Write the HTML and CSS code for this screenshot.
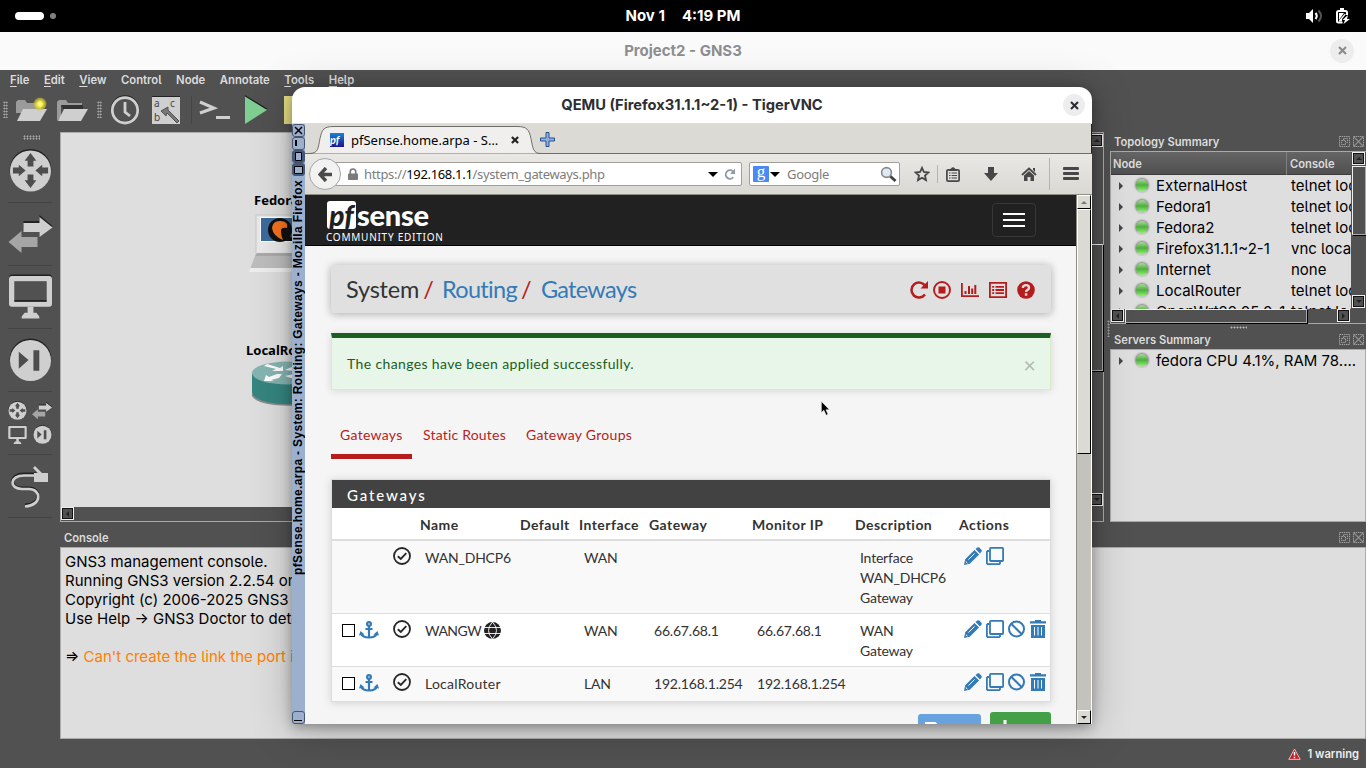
FILE: index.html
```
<!DOCTYPE html>
<html lang="en">
<head>
  <meta charset="UTF-8">
  <meta name="viewport" content="width=device-width, initial-scale=1.0">
  <title>Project2 - GNS3</title>
  <link rel="stylesheet" href="styles.css">
</head>
<body>
  <!-- shared icons -->
  <svg class="sprite" aria-hidden="true">
    <defs>
      <radialGradient id="glow"><stop offset="0" stop-color="#fffde0"/><stop offset=".35" stop-color="#fff44a"/><stop offset="1" stop-color="#c9bd20" stop-opacity=".5"/></radialGradient>
      <linearGradient id="navy" x2="0" y2="1"><stop offset="0" stop-color="#1484d8"/><stop offset="1" stop-color="#20128c"/></linearGradient>
    </defs>
    <symbol id="router" viewBox="0 0 44 44"><circle cx="22" cy="21.3" r="21.3" fill="#222"/><circle cx="22" cy="22.5" r="21" fill="#cfcfcf"/><path fill="#4d4d4d" d="M22 4l6 8h-3v6h-6v-6h-3zM22 40l6-8h-3v-6h-6v6h-3zM17 22l-7-6v3H4v6h6v3zM27 22l7-6v3h6v6h-6v3z"/></symbol>
    <symbol id="switch" viewBox="0 0 44 38"><path fill="#222" d="M15 6h16V0l13 11-13 10v-6H15z"/><path fill="#cfcfcf" d="M15 8h16V2l13 10.500L31 22v-5H15z"/><path fill="#a5a5a5" d="M29 22H13v-6L0 27l13 11v-6h16z"/></symbol>
    <symbol id="host" viewBox="0 0 44 45"><path fill="#222" fill-rule="evenodd" d="M3 0h38a3 3 0 0 1 3 3v27H0V3a3 3 0 0 1 3-3zM5.500 7v19h33V7z"/><path fill="#cfcfcf" fill-rule="evenodd" d="M3 1.500h38a3 3 0 0 1 3 3V30a3 3 0 0 1-3 3H3a3 3 0 0 1-3-3V4.500a3 3 0 0 1 3-3zM5.500 7v20.500h33V7z"/><path fill="#222" d="M5.500 26.500h33v1.300h-33z"/><path fill="#cfcfcf" d="M19 33h6v6h3l3 4v2H13v-2l3-4h3z"/></symbol>
    <symbol id="security" viewBox="0 0 44 44"><circle cx="22" cy="21.300" r="21.300" fill="#222"/><circle cx="22" cy="22.500" r="21" fill="#cfcfcf"/><path fill="#4d4d4d" d="M10 13.500L20 22l-10 9zM25 12h6v21h-6z"/></symbol>
    <symbol id="float" viewBox="0 0 11 11"><path fill="none" stroke="#a0a0a0" stroke-dasharray="1.500 .7" d="M.5.5h10v10H.5zM2.500 4.500h4v4h-4zM4.500 4V2.500h4v4H7"/></symbol>
    <symbol id="shut" viewBox="0 0 11 11"><path fill="none" stroke="#a0a0a0" stroke-dasharray="1.500 .7" d="M.5.5h10v10H.5z"/><path stroke="#8c8c8c" stroke-width="1.300" d="M1 1l9 9M10 1l-9 9"/></symbol>
    <symbol id="ok" viewBox="0 0 18 18"><circle cx="9" cy="9" r="8" fill="none" stroke="#282828" stroke-width="1.800"/><path d="M4.800 9.200l3 2.700 5.500-5.700" fill="none" stroke="#282828" stroke-width="1.900"/></symbol>
    <symbol id="anchor" viewBox="0 0 20 18"><g fill="none" stroke="#337ab7" stroke-width="2.200"><circle cx="10" cy="3" r="1.900"/><path d="M10 5v12M6.500 8h7M2 12c.8 3 4 4.500 8 4.500s7.200-1.500 8-4.500"/></g><path fill="#337ab7" d="M0 14.500L1.500 10l4 3.500zM20 14.500L18.500 10l-4 3.500z"/></symbol>
    <symbol id="pencil" viewBox="0 0 18 18"><path fill="#337ab7" d="M0 18l1.200-5.800 9.300-9.300 4.600 4.600-9.300 9.300zM11.500 2L13.300.6q1-.9 2 0l2.100 2.100q.9 1 0 2l-1.500 1.800z"/><path d="M4.500 12.500l6-6M1.800 14.500l1.700 1.700" stroke="#fff" fill="none"/></symbol>
    <symbol id="clone" viewBox="0 0 18 18"><g fill="none" stroke="#337ab7" stroke-width="1.800"><rect x="4" y=".9" width="13.100" height="13.100" rx=".8"/><path d="M3.300 4H1.700l-.8.800v11.500l.8.800h11.500l.8-.8v-1.500"/></g></symbol>
    <symbol id="ban" viewBox="0 0 18 18"><g fill="none" stroke="#337ab7" stroke-width="2"><circle cx="8.500" cy="9" r="7.500"/><path d="M3.200 3.700l10.600 10.600"/></g></symbol>
    <symbol id="trash" viewBox="0 0 16 18"><path fill="#337ab7" fill-rule="evenodd" d="M5 0h6v1.300h5v2.200H0V1.300h5zM1 5h14v13H1zM4 7v8.500h1V7zM7.500 7v8.500h1V7zM11 7v8.500h1V7z"/></symbol>
  </svg>

  <div class="topbar">
    <div class="workspaces"><span class="pill"></span><span class="dot"></span></div>
    <div class="clock"><span>Nov 1</span><span>4:19 PM</span></div>
    <div class="tray">
      <svg width="17" height="14" viewBox="0 0 17 14"><path fill="#fff" d="M0 4h3l4-4v14l-4-4H0z"/><path d="M9.500 4q2.500 3 0 6" fill="none" stroke="#fff" stroke-width="2"/><path d="M12.500 1.500q5 5.500 0 11" fill="none" stroke="#555" stroke-width="2"/></svg>
      <svg width="14" height="16" viewBox="0 0 14 16"><path d="M6.500 14.500H2.500q-1.500 0-1.500-1.500V4.500Q1 3 2.500 3h7Q11 3 11 4.500V7" fill="none" stroke="#fff" stroke-width="2"/><path fill="#fff" d="M4 0h4v3H4zM3 5h5L3 12zM3 12.500L8.500 6H10L6 11v2.500H3zM12 7l-5.500 5H9l-1.500 4L14 11h-3z"/></svg>
    </div>
  </div>

  <div class="gns3">
    <div class="titlebar">Project2 - GNS3
      <span class="close"><svg width="9" height="9" viewBox="0 0 9 9"><path d="M1 1l7 7M8 1L1 8" stroke="#8c8c8c" stroke-width="2.200"/></svg></span>
    </div>
    <div class="menubar">
      <span><u>F</u>ile</span><span><u>E</u>dit</span><span><u>V</u>iew</span><span>Control</span><span>Node</span><span>Annotate</span><span><u>T</u>ools</span><span><u>H</u>elp</span>
    </div>
    <div class="toolbar">
      <span class="grip-v"></span>
      <svg class="t-new" width="31" height="26" viewBox="0 0 31 26"><path fill="#9b9b9b" d="M0 5l2-2h7l2 3h14v10H0z"/><path fill="#cfcfcf" d="M7 12h24l-7 12H1z"/><circle cx="24" cy="7" r="6.500" fill="url(#glow)"/></svg>
      <svg class="t-open" width="31" height="26" viewBox="0 0 31 26"><path fill="#9b9b9b" d="M0 5l2-2h7l2 3h14v2H4v12L0 24z"/><path fill="#333" d="M4 8h22v4H6z"/><path fill="#cfcfcf" d="M7 12h24l-7 12H1z"/></svg>
      <span class="grip-v"></span>
      <svg class="t-clock" width="30" height="30" viewBox="0 0 30 30"><circle cx="15" cy="14.500" r="13" fill="none" stroke="#222" stroke-width="2.600"/><circle cx="15" cy="15.300" r="12.700" fill="none" stroke="#cfcfcf" stroke-width="2.800"/><path d="M15 7v10l5 4" fill="none" stroke="#cfcfcf" stroke-width="2.800"/></svg>
      <svg class="t-abc" width="28" height="28" viewBox="0 0 28 28"><path fill="#222" d="M0 0h28v3H0z"/><path fill="#cfcfcf" d="M0 1h28v27H0z"/><g fill="#444"><text x="2" y="11">a</text><text x="18" y="11">c</text><text x="2" y="25">b</text></g><path fill="#777" stroke="#555" d="M9 15l7-4v3l11 11-2 2-10-10-1 3z"/></svg>
      <span class="sep"></span>
      <svg class="t-term" width="31" height="22" viewBox="0 0 31 22"><path d="M1 3l14 6L1 14" fill="none" stroke="#cfcfcf" stroke-width="3"/><path fill="#cfcfcf" d="M17 17h14v3H17z"/></svg>
      <svg class="t-play" width="23" height="29" viewBox="0 0 23 29"><path fill="#222" d="M0 0l23 14H0z"/><path fill="#80cf92" d="M0 1.500L22 15 0 29z"/></svg>
      <span class="note"></span>
    </div>

    <div class="workspace">
      <div class="dock">
        <span class="grip-h"></span>
        <div class="tool"><svg width="43" height="43"><use href="#router"/></svg></div>
        <div class="tool"><svg width="45" height="38"><use href="#switch"/></svg></div>
        <div class="tool"><svg width="43" height="45"><use href="#host"/></svg></div>
        <div class="tool"><svg width="43" height="44"><use href="#security"/></svg></div>
        <div class="tool all">
          <svg width="19" height="19"><use href="#router"/></svg><svg width="20" height="19"><use href="#switch"/></svg>
          <svg width="19" height="19"><use href="#host"/></svg><svg width="19" height="19"><use href="#security"/></svg>
        </div>
        <div class="tool"><svg width="40" height="46" viewBox="0 0 40 46"><path fill="none" stroke="#222" stroke-width="3" d="M26 11H14C-1 11-1 25 12 25h7c12 0 14 16-4 17"/><path fill="none" stroke="#cfcfcf" stroke-width="2.600" d="M26 12.500H14C-1 12.500-1 26 12 26h7c12 0 14 16-4 17.500"/><path fill="#cfcfcf" d="M24 10h4l-5-5 2-2 7 7h6v9H24z"/></svg></div>
      </div>

      <div class="main">
        <div class="upper">
          <div class="canvas-frame">
            <div class="canvas">
              <div class="node fedora">
                <b>Fedora1</b>
                <svg width="80" height="62" viewBox="0 0 80 62"><path fill="#e9e9e9" stroke="#c8c8c8" d="M7 2h66v40H7z"/><path fill="#3c6c9d" stroke="#fff" d="M11.500 4.500h56v24h-56z"/><circle cx="31" cy="17" r="12" fill="#111"/><path fill="#f4731c" d="M23 15q1-8 9-7 8 1 6 7-6-1-6 3 0 5 2 9-10-4-11-12z"/><path fill="#111" d="M37 20l10 8H36z"/><path fill="#aaa" d="M8 40h64v3H6z"/><path fill="#bdbdbd" d="M6 43h68l6 16H0z"/><path fill="#eee" d="M1 55h78l1 4H0z"/></svg>
              </div>
              <div class="node local">
                <b>LocalRouter</b>
                <svg width="72" height="46" viewBox="0 0 72 46"><path fill="#8c8c8c" d="M0 33v2c6 13 66 13 72 0v-2z"/><path fill="#36857f" d="M0 12v20c4 15 68 15 72 0V12z"/><ellipse cx="36" cy="12" rx="36" ry="11.500" fill="#86b5b1"/><path fill="#fff" d="M12 5l3-2 13 4 3-2v5H20l4-2zM12 20l2-6 3 2 8-3h5l-3 4-8 2 3 1zM33 9l9-4v3h10v2H42zM33 15l9-2v5z"/></svg>
              </div>
            </div>
            <div class="vbar"><i class="sb up"></i><i class="thumb"></i><i class="sb down"></i></div>
            <div class="hbar"><i class="sb left"></i></div>
          </div>
          <div class="grip-side"></div>
          <div class="panels">
            <div class="panel-title">Topology Summary<svg width="11" height="11"><use href="#float"/></svg><svg width="11" height="11"><use href="#shut"/></svg></div>
            <div class="tree">
              <div class="rows">
                <div class="row head"><span class="node-col">Node</span><span>Console</span></div>
                <div class="row"><i class="arrow"></i><i class="led"></i><span class="name">ExternalHost</span><span>telnet localhost</span></div>
                <div class="row"><i class="arrow"></i><i class="led"></i><span class="name">Fedora1</span><span>telnet localhost</span></div>
                <div class="row"><i class="arrow"></i><i class="led"></i><span class="name">Fedora2</span><span>telnet localhost</span></div>
                <div class="row"><i class="arrow"></i><i class="led"></i><span class="name">Firefox31.1.1~2-1</span><span>vnc localhost</span></div>
                <div class="row"><i class="arrow"></i><i class="led"></i><span class="name">Internet</span><span>none</span></div>
                <div class="row"><i class="arrow"></i><i class="led"></i><span class="name">LocalRouter</span><span>telnet localhost</span></div>
                <div class="row"><i class="arrow"></i><i class="led"></i><span class="name">OpenWrt22.05.0-1</span><span>telnet localhost</span></div>
              </div>
              <div class="vbar"><i class="sb up"></i><i class="thumb"></i><i class="sb down"></i></div>
              <div class="hbar"><i class="sb left"></i><i class="thumb"></i><i class="sb right"></i></div>
            </div>
            <span class="grip-h small"></span>
            <div class="panel-title servers">Servers Summary<svg width="11" height="11"><use href="#float"/></svg><svg width="11" height="11"><use href="#shut"/></svg></div>
            <div class="server-list">
              <div class="row"><i class="arrow"></i><i class="led"></i><span class="name">fedora CPU 4.1%, RAM 78....</span></div>
            </div>
          </div>
        </div>
        <div class="panel-title console-title">Console<svg width="11" height="11"><use href="#float"/></svg><svg width="11" height="11"><use href="#shut"/></svg></div>
        <div class="console">
          <p>GNS3 management console.</p>
          <p>Running GNS3 version 2.2.54 on Linux</p>
          <p>Copyright (c) 2006-2025 GNS3 Technologies.</p>
          <p>Use Help → GNS3 Doctor to detect issues.</p>
          <p>&nbsp;</p>
          <p>⇒ <span class="warn">Can't create the link the port is not free</span></p>
        </div>
      </div>
    </div>
    <div class="statusbar">
      <svg width="13" height="12" viewBox="0 0 13 12"><path fill="#c0232b" stroke="#f2b5b5" d="M6.500 1l5.700 10.400H.8z"/><path stroke="#fff" stroke-width="1.500" d="M6.500 4v3.500M6.500 8.700v1.500"/></svg>
      1 warning
    </div>
  </div>

  <div class="vnc">
    <div class="vnc-title">QEMU (Firefox31.1.1~2-1) - TigerVNC
      <span class="close"><svg width="9" height="9" viewBox="0 0 9 9"><path d="M1 1l7 7M8 1L1 8" stroke="#2e2e33" stroke-width="2.100"/></svg></span>
    </div>
    <div class="screen">
      <div class="wm-bar">
        <i class="wb"><svg width="13" height="13"><path d="M3 3l7 7M10 3l-7 7" stroke="#000" stroke-width="1.500"/></svg></i>
        <i class="wb"><svg width="13" height="13"><path d="M4 3v6" stroke="#000" stroke-width="2"/></svg></i>
        <i class="wb dark"><svg width="13" height="13"><path d="M3.500 2.500h6v8h-6z" fill="#9cb0ce" stroke="#000"/></svg></i>
        <i class="wb dark"><svg width="13" height="13"><path d="M2.500 3.500h8v7h-8z" fill="#9cb0ce" stroke="#000"/></svg></i>
        <span class="wm-text">pfSense.home.arpa - System: Routing: Gateways - Mozilla Firefox</span>
        <i class="wb last"><svg width="13" height="13"><path d="M2 9.500h8" stroke="#000"/></svg></i>
      </div>
      <div class="browser">
        <div class="tabstrip">
          <div class="tab">
            <svg class="tab-shape" width="236" height="30" viewBox="0 0 236 30"><path fill="#f0efed" stroke="#6f6e6a" d="M0 28.500h4c10 0 9-6 11-15C17 4 19 1.500 29 1.500h183c10 0 12 3 14 12 2 10 2 15 10 15"/></svg>
            <svg class="favicon" width="14" height="14" viewBox="0 0 14 14"><path fill="url(#navy)" d="M0 0h14v14H0z"/><text x="0" y="10.500">pf</text></svg>
            <span class="tab-name">pfSense.home.arpa - S…</span>
            <svg width="8" height="8" viewBox="0 0 9 9"><path d="M1 1l7 7M8 1L1 8" stroke="#222" stroke-width="2.400"/></svg>
          </div>
          <svg class="plus" width="15" height="15" viewBox="0 0 15 15"><path fill="#8db0e0" stroke="#27508e" d="M6 .5h3V6h5.500v3H9v5.500H6V9H.5V6H6z"/></svg>
        </div>
        <div class="navbar">
          <span class="back"><svg width="15" height="15" viewBox="0 0 15 15"><path d="M8 1L2 7.500 8 14M2.500 7.500H14" fill="none" stroke="#4a4a4a" stroke-width="3.400"/></svg></span>
          <div class="url">
            <svg width="10" height="12" viewBox="0 0 11 13"><path d="M2.500 7V4q0-3 3-3t3 3v3" fill="none" stroke="#7b7b7b" stroke-width="1.800"/><rect y="6" width="11" height="7" rx="1" fill="#7b7b7b"/></svg>
            <span class="address">https://<b>192.168.1.1</b>/system_gateways.php</span>
            <i class="caret"></i>
            <svg width="12" height="13" viewBox="0 0 13 13"><path d="M10 9.500a4.600 4.600 0 1 1-.5-6.500" fill="none" stroke="#8d99a5" stroke-width="2"/><path fill="#8d99a5" d="M12 0v6H6.500z"/></svg>
          </div>
          <div class="search">
            <span class="g">g</span><i class="caret"></i><span class="hint">Google</span>
            <svg width="17" height="17" viewBox="0 0 17 17"><path d="M10 10l5.500 5" stroke="#444" stroke-width="3"/><circle cx="6.500" cy="6.500" r="4.900" fill="#dce9f6" stroke="#8a8a8a" stroke-width="1.600"/></svg>
          </div>
          <svg class="i-star" width="16" height="16" viewBox="0 0 16 16"><path fill="none" stroke="#474747" stroke-width="1.800" d="M8 1.800l1.900 4.200 4.500.5-3.400 3 1 4.600-4-2.400-4 2.400 1-4.600-3.400-3 4.500-.5z"/></svg>
          <span class="nav-sep"></span>
          <svg class="i-clip" width="14" height="15" viewBox="0 0 14 15"><rect x=".9" y="2.900" width="12.200" height="11.200" rx="1.200" fill="none" stroke="#474747" stroke-width="1.700"/><path stroke="#474747" stroke-width="1.100" d="M3 6h1.500M5.500 6H11M3 8.500h1.500M5.500 8.500H11M3 11h1.500M5.500 11H11"/><path fill="#474747" d="M3 3l2-1.500Q7-1 9 1.500L11 3v1H3z"/></svg>
          <svg class="i-down" width="14" height="14" viewBox="0 0 14 14"><path fill="#474747" d="M4 0h6v6h4l-7 8-7-8h4z"/></svg>
          <svg class="i-home" width="16" height="14" viewBox="0 0 16 14"><path d="M1 8l7-6.500L15 8" fill="none" stroke="#474747" stroke-width="1.800"/><path fill="#474747" d="M8 4l5 4.500V14H9.500v-4h-3v4H3V8.500zM12 1h2v4l-2-2z"/></svg>
          <span class="nav-sep tall"></span>
          <span class="burger"><i></i><i></i><i></i></span>
        </div>

        <div class="viewport">
          <div class="page">
            <div class="pf-nav">
              <div class="brand">
                <div class="logo"><span class="pf">pf</span><span class="sense">sense</span></div>
                <div class="edition">COMMUNITY EDITION</div>
              </div>
              <div class="toggle"><i></i><i></i><i></i></div>
            </div>
            <div class="pf-body">
              <div class="crumbs">
                <span>System</span><em>/</em><a>Routing</a><em>/</em><a>Gateways</a>
                <div class="crumb-icons">
                  <svg width="18" height="18" viewBox="0 0 18 18"><path d="M15 13.500a7.500 7.500 0 1 1 .3-8.500" fill="none" stroke="#b71c1c" stroke-width="2.500"/><path fill="#b71c1c" d="M18 0v7.500h-7.500z"/></svg>
                  <svg width="18" height="18" viewBox="0 0 18 18"><circle cx="9" cy="9" r="8" fill="none" stroke="#b71c1c" stroke-width="1.900"/><path fill="#b71c1c" d="M5.500 5.500h7v7h-7z"/></svg>
                  <svg width="18" height="14" viewBox="0 0 18 14"><path fill="#b71c1c" d="M0 0h1.800v12.200H18V14H0zM3.500 8h2v3h-2zM7 3h2v8H7zM10.200 5.500h2V11h-2zM13.300 2h2v9h-2z"/></svg>
                  <svg width="18" height="16" viewBox="0 0 18 16"><path fill="none" stroke="#b71c1c" stroke-width="1.800" d="M.9.900h16.200v14.200H.9zM3.200 4.800h2M6.500 4.800H15M3.200 8h2M6.500 8H15M3.200 11.200h2M6.500 11.200H15"/></svg>
                  <svg width="18" height="18" viewBox="0 0 18 18"><circle cx="9" cy="9" r="8.800" fill="#b71c1c"/><path d="M5.800 6.800Q6 4.200 9 4.200t3 2.600q0 1.500-1.700 2.300Q9 9.700 9 11" fill="none" stroke="#e0e0e0" stroke-width="2.300"/><path fill="#e0e0e0" d="M7.800 12.200h2.500v2.500H7.800z"/></svg>
                </div>
              </div>
              <div class="alert">The changes have been applied successfully.<span>×</span></div>
              <div class="tabs"><a class="active">Gateways</a><a>Static Routes</a><a>Gateway Groups</a></div>
              <div class="panel">
                <h2>Gateways</h2>
                <table>
                  <tr><th class="c-sel"></th><th class="c-ok"></th><th class="c-name">Name</th><th class="c-def">Default</th><th class="c-if">Interface</th><th class="c-ip">Gateway</th><th class="c-ip">Monitor IP</th><th class="c-desc">Description</th><th>Actions</th></tr>
                  <tr class="r1">
                    <td></td><td class="state"><svg width="18" height="18"><use href="#ok"/></svg></td><td>WAN_DHCP6</td><td></td><td>WAN</td><td></td><td></td><td class="desc">Interface WAN_DHCP6 Gateway</td>
                    <td><div class="acts"><svg width="18" height="18"><use href="#pencil"/></svg><svg width="18" height="18"><use href="#clone"/></svg></div></td>
                  </tr>
                  <tr class="r2">
                    <td><div class="sel"><i class="box"></i><svg width="20" height="18"><use href="#anchor"/></svg></div></td><td class="state"><svg width="18" height="18"><use href="#ok"/></svg></td>
                    <td class="gw">WANGW <svg class="globe" width="17" height="17" viewBox="0 0 17 17"><circle cx="8.500" cy="8.500" r="8.500" fill="#222"/><path d="M0 5.500h17M0 11.500h17M8.500 0q-8 8.500 0 17M8.500 0q8 8.500 0 17" fill="none" stroke="#fff" stroke-width=".9"/></svg></td>
                    <td></td><td>WAN</td><td>66.67.68.1</td><td>66.67.68.1</td><td class="desc">WAN Gateway</td>
                    <td><div class="acts"><svg width="18" height="18"><use href="#pencil"/></svg><svg width="18" height="18"><use href="#clone"/></svg><svg width="18" height="18"><use href="#ban"/></svg><svg width="16" height="18"><use href="#trash"/></svg></div></td>
                  </tr>
                  <tr class="r3">
                    <td><div class="sel"><i class="box"></i><svg width="20" height="18"><use href="#anchor"/></svg></div></td><td class="state"><svg width="18" height="18"><use href="#ok"/></svg></td>
                    <td class="wide">LocalRouter</td><td></td><td>LAN</td><td>192.168.1.254</td><td>192.168.1.254</td><td></td>
                    <td><div class="acts"><svg width="18" height="18"><use href="#pencil"/></svg><svg width="18" height="18"><use href="#clone"/></svg><svg width="18" height="18"><use href="#ban"/></svg><svg width="16" height="18"><use href="#trash"/></svg></div></td>
                  </tr>
                </table>
              </div>
              <div class="buttons">
                <span class="save"><svg width="14" height="14" viewBox="0 0 14 14"><path fill="none" stroke="#fff" stroke-width="2" d="M1 1h9l3 3v9H1z"/></svg>Save</span>
                <span class="add"><svg width="12" height="12" viewBox="0 0 12 12"><path d="M6 0v12M0 6h12" stroke="#fff" stroke-width="3"/></svg>Add</span>
              </div>
            </div>
          </div>
          <div class="page-scroll"><i class="sb up"></i><i class="thumb"></i><i class="sb down"></i></div>
        </div>
      </div>
    </div>
    <svg class="cursor" width="9" height="15" viewBox="0 0 9 15"><path stroke="#fff" stroke-width=".6" d="M.3.300v11.500l2.600-2.500 2.200 5 2-1-2.100-4.500h3.500z"/></svg>
  </div>
</body>
</html>
```
FILE: styles.css
```
* {
  box-sizing: border-box;
}
body {
  margin: 0;
  width: 1366px;
  height: 768px;
  overflow: hidden;
  position: relative;
  background: #515151;
  font-family: Inter, sans-serif;
  color: #000;
  white-space: nowrap;
}
svg {
  display: block;
  flex: none;
}
i, em {
  font-style: normal;
}
p {
  margin: 0;
}
.sprite {
  position: absolute;
  width: 0;
  height: 0;
}

/* desktop bar */
.topbar {
  height: 32px;
  background: #000;
  display: grid;
  grid-template-columns: 1fr auto 1fr;
  align-items: center;
  color: #fff;
  font-size: 15px;
  font-weight: 700;
}
.workspaces {
  display: flex;
  align-items: center;
  gap: 6px;
  padding-left: 15px;
}
.pill {
  width: 29px;
  height: 8px;
  border-radius: 4px;
  background: #fff;
}
.dot {
  width: 6px;
  height: 6px;
  border-radius: 3px;
  background: #808080;
}
.clock {
  display: flex;
  gap: 17px;
  padding-bottom: 1px;
}
.tray {
  display: flex;
  align-items: center;
  justify-content: flex-end;
  gap: 13px;
  padding-right: 16px;
}

/* gns3 window */
.gns3 {
  height: 736px;
  display: flex;
  flex-direction: column;
  background: #515151;
}
.titlebar {
  height: 38px;
  padding-bottom: 1px;
  background: #fafafa;
  color: #8e8e90;
  font-size: 15px;
  font-weight: 700;
  display: flex;
  align-items: center;
  justify-content: center;
  position: relative;
}
.close {
  position: absolute;
  right: 12px;
  width: 24px;
  height: 24px;
  border-radius: 12px;
  background: #ededed;
  display: flex;
  align-items: center;
  justify-content: center;
}
.menubar {
  height: 20px;
  padding-left: 10px;
  display: flex;
  align-items: center;
  gap: 14.500px;
  color: #dcdcdc;
  font-size: 11.300px;
  font-weight: 600;
  font-feature-settings: "cv05";
}
.menubar u {
  text-underline-offset: 2px;
}
.toolbar {
  height: 42px;
  display: flex;
  align-items: center;
  padding: 0 0 3px 3px;
}
.grip-v {
  width: 5px;
  height: 17px;
  background: radial-gradient(#b4b4b4 40%, transparent 55%) 0 0 / 2.500px 3px;
}
.t-new {
  margin-left: 8px;
}
.t-open {
  margin: 0 9px 0 10px;
}
.t-clock {
  margin-left: 8px;
}
.t-abc {
  margin-left: 12px;
}
.t-abc text {
  font: 10px "Noto Sans", sans-serif;
}
.sep {
  width: 1px;
  height: 28px;
  margin: 0 7px 0 11px;
  background: #454545;
}
.t-play {
  margin-left: 15px;
}
.note {
  width: 27px;
  height: 28px;
  margin-left: 16px;
  background: #e5df84;
}
.workspace {
  display: flex;
  height: 608px;
}
.dock {
  width: 60px;
  display: flex;
  flex-direction: column;
  align-items: center;
}
.grip-h {
  width: 17px;
  height: 5px;
  margin: 3px 0 0 3px;
  flex: none;
  background: radial-gradient(#b4b4b4 40%, transparent 55%) 0 0 / 3px 2.500px;
}
.tool {
  width: 44px;
  height: 63px;
  padding-bottom: 1px;
  border-bottom: 1px solid #444;
  display: flex;
  align-items: center;
  justify-content: center;
}
.all {
  flex-wrap: wrap;
  align-content: center;
  justify-content: space-between;
  gap: 5px 0;
}
.main {
  flex: 1;
  min-width: 0;
}
.upper {
  display: flex;
  height: 390px;
}
.canvas-frame {
  width: 1044px;
  border: 1px solid #aaa;
  display: grid;
  grid-template-columns: 1fr 13px;
  grid-template-rows: 1fr 14px;
}
.canvas {
  background: #dedede;
  position: relative;
}
.node {
  position: absolute;
  font: 13px "Noto Sans", sans-serif;
}
.node b {
  display: block;
  line-height: 18px;
}
.fedora {
  left: 188px;
  top: 58px;
}
.fedora b {
  padding-left: 5px;
}
.fedora svg {
  margin-top: 4px;
}
.local {
  left: 185px;
  top: 208px;
}
.local svg {
  margin: 2px 0 0 6px;
}

/* old style scrollbars */
.vbar, .hbar {
  display: flex;
  background: #515151;
}
.vbar {
  flex-direction: column;
}
.sb {
  width: 13px;
  height: 13px;
  flex: none;
  border: 1px solid #eee;
  outline: 1px solid #111;
  outline-offset: -2px;
  display: flex;
  align-items: center;
  justify-content: center;
}
.sb::after {
  content: "";
  border: 3px solid transparent;
}
.up::after {
  border-top: 0;
  border-bottom-color: #222;
}
.down::after {
  border-bottom: 0;
  border-top-color: #222;
}
.left::after {
  border-left: 0;
  border-right-color: #222;
}
.right::after {
  border-right: 0;
  border-left-color: #222;
}
.thumb {
  border: 1px solid #eee;
  border-right-color: #aaa;
  border-bottom-color: #aaa;
  box-shadow: 1px 1px 0 #000;
}
.canvas-frame .vbar .sb {
  margin-top: 1px;
}
.canvas-frame .vbar .thumb {
  margin: 97px 0 121px;
  height: 127px;
}

/* right panels */
.grip-side {
  width: 6px;
  height: 17px;
  margin-top: 188px;
  background: radial-gradient(#a0a0a0 40%, transparent 55%) 3px 0 / 3px 3px repeat-y;
}
.panels {
  width: 256px;
}
.panel-title {
  height: 19px;
  padding: 1px 1px 0 4px;
  display: flex;
  align-items: center;
  gap: 3px;
  color: #dcdcdc;
  font-size: 11.200px;
  font-weight: 600;
  font-feature-settings: "cv05";
}
.panel-title svg {
  margin: -1px 1px 0 0;
}
.panel-title svg + svg {
  margin-left: -1px;
}
.panel-title svg:first-of-type {
  margin-left: auto;
}
.tree {
  height: 173px;
  border: 1px solid #aaa;
  border-right: 0;
  display: grid;
  grid-template-columns: 1fr 14px;
  grid-template-rows: 1fr 14px;
}
.rows {
  background: #dedede;
  overflow: hidden;
  height: 157px;
  width: 240px;
}
.row {
  height: 21px;
  display: flex;
  align-items: center;
  font-size: 15px;
  font-feature-settings: "cv05";
}
.row.head {
  height: 23px;
  padding-top: 1px;
  background: linear-gradient(#656565, #505050);
  border-bottom: 1px solid #3c3c3c;
  color: #dcdcdc;
  font-size: 11.200px;
  font-weight: 600;
}
.node-col {
  width: 176px;
  height: 23px;
  line-height: 24px;
  padding-left: 2px;
  margin-right: 3px;
  border-right: 1px solid #808080;
}
.arrow {
  margin-left: 8px;
  border: 4px solid transparent;
  border-left: 4px solid #444;
  border-right: 0;
}
.led {
  width: 14px;
  height: 14px;
  margin: -2px 7px 0 12px;
  border-radius: 7px;
  border: 1px solid #9c9c9c;
  border-bottom-color: #b8c8b4;
  background: linear-gradient(#a6dc98, #4fae3c 50%, #8af36c);
  box-shadow: 0 0 1px 1px #c4c4c4;
  flex: none;
}
.name {
  width: 135px;
  flex: none;
}
.tree .vbar .thumb {
  height: 69px;
  margin: 1px 0 60px;
}
.tree .hbar .thumb {
  width: 182px;
  margin: 0 30px 0 1px;
}
.tree .hbar {
  width: 241px;
}
.small {
  display: block;
  height: 3px;
  margin: 2px 0 0 120px;
}
.servers {
  margin-top: 1px;
}
.server-list {
  height: 173px;
  border: 1px solid #aaa;
  background: #dedede;
}
.console-title {
  height: 25px;
  padding-top: 7px;
}
.console {
  height: 192px;
  border: 1px solid #aaa;
  background: #dedede;
  padding: 4px;
  font-size: 15px;
  line-height: 19px;
  font-feature-settings: "cv05";
}
.warn {
  color: #ff8000;
}
.statusbar {
  flex: 1;
  display: flex;
  align-items: center;
  justify-content: flex-end;
  gap: 6px;
  padding-right: 7px;
  color: #eee;
  font-size: 11.200px;
  font-weight: 600;
}

/* vnc window on top of gns3 */
.vnc {
  position: absolute;
  left: 292px;
  top: 87px;
  width: 800px;
  height: 637px;
  border-radius: 13px 13px 0 0;
  box-shadow: 0 3px 12px rgba(0, 0, 0, .3), 0 5px 40px rgba(0, 0, 0, .25);
}
.vnc-title {
  height: 37px;
  border-radius: 13px 13px 0 0;
  border-bottom: 1px solid #ddd;
  background: #fff;
  color: #2e2e33;
  font-size: 14.700px;
  font-weight: 700;
  display: flex;
  align-items: center;
  justify-content: center;
  position: relative;
}
.vnc-title .close {
  right: 7px;
  width: 22px;
  height: 22px;
}
.screen {
  height: 600px;
  display: flex;
  overflow: hidden;
}
.wm-bar {
  width: 13px;
  background: #9cb0ce;
  display: flex;
  flex-direction: column;
  align-items: center;
}
.wb {
  width: 13px;
  height: 13px;
  border-radius: 3px;
  border: 1px solid #47566e;
  display: flex;
  align-items: center;
  justify-content: center;
  flex: none;
}
.dark {
  background: #405a80;
}
.last {
  margin-top: auto;
}
.wm-text {
  writing-mode: vertical-rl;
  transform: rotate(180deg);
  font: bold 12px/13px "Liberation Sans", sans-serif;
  letter-spacing: .330px;
  margin-top: 4px;
}
.browser {
  width: 787px;
  display: flex;
  flex-direction: column;
  font-family: "Noto Sans", sans-serif;
}
.tabstrip {
  height: 30px;
  background: #dbdad5;
  border-bottom: 1px solid #6f6e6a;
  border-right: 1px solid #222;
  display: flex;
  align-items: center;
}
.tab {
  width: 236px;
  height: 30px;
  display: flex;
  align-items: center;
  position: relative;
  padding: 2px 0 0 25px;
}
.tab-shape {
  position: absolute;
  left: 0;
  top: 1px;
}
.favicon, .tab-name, .tab-name + svg {
  position: relative;
}
.favicon text {
  font: italic bold 11px Lato, sans-serif;
  fill: #fff;
}
.tab-name {
  width: 161px;
  padding-left: 7px;
  margin-right: 6px;
  font-size: 13px;
}
.plus {
  margin: 2px 0 0 -1px;
}
.navbar {
  height: 41px;
  border-bottom: 1px solid #8f8d85;
  background: linear-gradient(#e9e8e5, #d9d8d3);
  display: flex;
  align-items: center;
  padding-left: 4px;
}
.back {
  width: 32px;
  height: 32px;
  border-radius: 16px;
  border: 1px solid #a1a5ab;
  background: #f2f2f0;
  display: flex;
  align-items: center;
  justify-content: center;
  z-index: 1;
}
.url {
  width: 407px;
  height: 24px;
  margin-left: -6px;
  padding: 0 5px 0 12px;
  border: 1px solid #a09f99;
  border-radius: 0 2px 2px 0;
  background: #fff;
  display: flex;
  align-items: center;
}
.address {
  flex: 1;
  padding-left: 6px;
  font-size: 13px;
  letter-spacing: -.330px;
  color: #7d7d7d;
}
.address b {
  color: #000;
  font-weight: 400;
}
.caret {
  border: 5px solid transparent;
  border-top-color: #000;
  border-bottom: 0;
}
.caret + svg {
  margin-left: 6px;
}
.search {
  width: 151px;
  height: 24px;
  margin-left: 7px;
  padding: 0 2px 0 3px;
  border: 1px solid #a09f99;
  border-radius: 2px;
  background: #fff;
  display: flex;
  align-items: center;
}
.g {
  width: 16px;
  height: 16px;
  margin-right: 1px;
  border-radius: 1px;
  background: #4a8af4;
  color: #fff;
  font: 17px/12px "Liberation Serif", serif;
  text-align: center;
}
.hint {
  flex: 1;
  padding-left: 7px;
  color: #7d7d7d;
  font-size: 13px;
  letter-spacing: -.3px;
}
.i-star {
  margin-left: 14px;
}
.nav-sep {
  width: 1px;
  height: 18px;
  margin: 0 8px 0 7px;
  background: #b5b4af;
}
.i-down {
  margin: 0 23px 0 24px;
}
.tall {
  height: 32px;
  margin: 0 13px 0 12px;
}
.burger, .toggle {
  display: flex;
  flex-direction: column;
}
.burger {
  width: 16px;
  gap: 2px;
  margin-top: -2px;
}
.burger i {
  height: 3px;
  border-radius: 1px;
  background: #474747;
}

/* pfsense page */
.viewport {
  height: 529px;
  display: flex;
}
.page {
  width: 771px;
  overflow: hidden;
  background: #f5f5f5;
  color: #333;
  font-family: Lato, sans-serif;
  font-size: 14px;
}
.pf-nav {
  height: 51px;
  background: #212121;
  border-bottom: 1px solid #000;
  padding: 6px 40px 0 21px;
  display: flex;
  justify-content: space-between;
  color: #fff;
}
.logo {
  height: 29px;
  display: flex;
}
.pf {
  width: 29px;
  height: 28px;
  margin-left: 1px;
  background: #fff;
  border-radius: 3px;
  color: #212121;
  font: italic 900 28px/29px Lato, sans-serif;
  text-align: center;
}
.sense {
  font: 900 29px/27px Lato, sans-serif;
  letter-spacing: -.3px;
  padding-left: 1px;
}
.edition {
  font: 10px/15px "Noto Sans", sans-serif;
  letter-spacing: .750px;
}
.toggle {
  width: 44px;
  height: 34px;
  margin-top: 2px;
  border: 1px solid #383838;
  border-radius: 4px;
  align-items: center;
  justify-content: center;
  gap: 4px;
}
.toggle i {
  width: 22px;
  height: 2px;
  background: #fff;
}
.pf-body {
  padding: 19px 25px 0 26px;
}
.crumbs {
  height: 48px;
  padding: 0 16px 0 15px;
  border-radius: 3px;
  background: #e0e0e0;
  box-shadow: 0 1px 8px rgba(0, 0, 0, .3);
  display: flex;
  align-items: center;
  font-size: 23.500px;
  letter-spacing: -.7px;
}
.crumbs span {
  letter-spacing: -.2px;
}
.crumbs em {
  color: #b71c1c;
  padding: 0 10px 0 4px;
}
.crumbs span + em {
  padding-right: 9px;
}
.crumbs a {
  color: #337ab7;
}
.crumb-icons {
  margin-left: auto;
  padding-top: 2px;
  display: flex;
  align-items: center;
  gap: 10px;
}
.crumb-icons svg:first-child {
  margin-right: -5px;
}
.alert {
  height: 57px;
  margin-top: 20px;
  padding: 0 14px 0 15px;
  border: 1px solid #d9ecc8;
  border-top: 5px solid #1b5e20;
  background: #e8f5e9;
  box-shadow: 0 1px 8px rgba(0, 0, 0, .12);
  color: #1b5e20;
  display: flex;
  align-items: center;
  justify-content: space-between;
  letter-spacing: .370px;
}
.alert span {
  font-size: 21px;
  color: #b0bab0;
  padding-top: 2px;
}
.tabs {
  height: 46px;
  margin-top: 23px;
  display: flex;
  color: #b71c1c;
  letter-spacing: .2px;
}
.tabs a {
  height: 46px;
  padding: 13px 9px 0;
  line-height: 18px;
  margin-right: 2px;
}
.tabs a:last-child {
  letter-spacing: .3px;
}
.tabs a.active {
  width: 81px;
  letter-spacing: .3px;
  border-bottom: 5px solid #b71c1c;
}
.panel {
  margin-top: 20px;
  border: 1px solid #ddd;
  background: #fff;
  box-shadow: 0 1px 8px rgba(0, 0, 0, .15);
}
.panel h2 {
  margin: 0;
  height: 28px;
  padding-left: 15px;
  background: #424242;
  color: #fff;
  font-size: 15px;
  font-weight: 500;
  line-height: 31px;
  letter-spacing: 1.850px;
}
table {
  width: 718px;
  table-layout: fixed;
  border-collapse: collapse;
}
th {
  height: 32px;
  padding: 2px 0 0;
  text-align: left;
  font-weight: 700;
  letter-spacing: .450px;
}
td {
  padding: 7px 5px 0;
  vertical-align: top;
  line-height: 20px;
  letter-spacing: -.2px;
  border-top: 1px solid #ddd;
  white-space: normal;
}
.wide {
  letter-spacing: .250px;
}
.gw {
  white-space: nowrap;
  letter-spacing: -.5px;
}
.c-sel { width: 55px; }
.c-ok { width: 33px; }
.c-name { width: 100px; }
.c-def { width: 59px; }
.c-if { width: 70px; }
.c-ip { width: 103px; }
.c-desc { width: 104px; }
.r1 {
  height: 73px;
}
.r1 td {
  border-top-width: 2px;
}
.r2 {
  height: 53px;
}
.r3 {
  height: 35px;
}
.r1, .r3 {
  background: #f9f9f9;
}
td svg {
  margin-top: -1px;
}
.state {
  padding-left: 6px;
}
.desc {
  padding-right: 10px;
}
td .globe {
  display: inline-block;
  vertical-align: -3px;
  margin: -3px 0 0;
}
.sel, .acts {
  display: flex;
  gap: 4px;
}
.sel {
  padding-left: 5px;
}
.sel svg {
  margin: 0 0 0 -1px;
}
.box {
  width: 13px;
  height: 13px;
  margin: 3px 1px 0 0;
  border: 1px solid #000;
  background: #fff;
  flex: none;
}
.buttons {
  display: flex;
  justify-content: flex-end;
  gap: 9px;
  margin-top: 10px;
  color: #fff;
}
.buttons span {
  height: 34px;
  border-radius: 3px;
  display: flex;
  justify-content: center;
  gap: 6px;
  padding-top: 8px;
}
.save {
  width: 63px;
  margin-top: 2px;
  background: #68a2df;
}
.add {
  width: 61px;
  background: #43a047;
}
.page-scroll {
  width: 16px;
  background: #c3c2bc;
  border-left: 1px solid #8f8d85;
  border-right: 1px solid #fff;
  display: flex;
  flex-direction: column;
}
.page-scroll .sb {
  width: 14px;
  height: 14px;
  background: #dbdad5;
  border: 1px solid #fff;
  border-right-color: #000;
  border-bottom-color: #000;
  outline: 0;
}
.page-scroll .up::after {
  border-bottom-color: #777;
}
.page-scroll .thumb {
  height: 245px;
  margin-bottom: auto;
  background: #dbdad5;
  border-color: #fff #000 #000 #fff;
  box-shadow: none;
}
.cursor {
  position: absolute;
  left: 529px;
  top: 314px;
}
```
